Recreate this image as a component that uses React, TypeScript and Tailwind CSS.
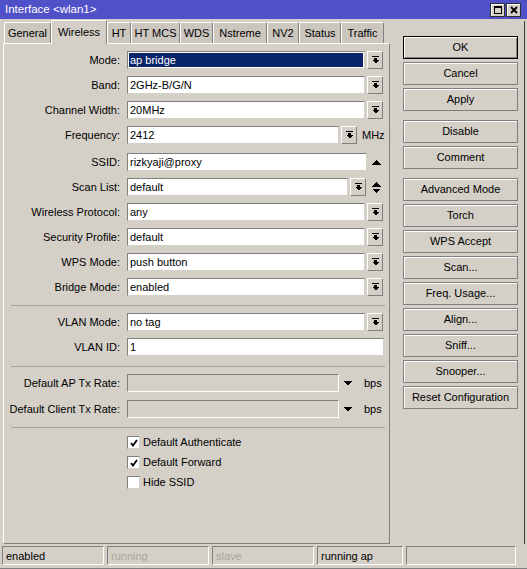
import React from 'react';

const sunken = 'border border-t-[#808080] border-l-[#808080] border-r-[#d4d0c8] border-b-[#d4d0c8]';
const raised = 'border border-t-white border-l-white border-r-[#808080] border-b-[#808080]';

function DropBtn() {
  return (
    <div className={`w-[16px] h-[18px] shrink-0 flex items-center justify-center bg-[#d4d0c8] ${raised}`}>
      <svg width="7" height="8" viewBox="0 0 7 8" shapeRendering="crispEdges">
        <rect x="0" y="0" width="7" height="1" fill="#000" />
        <rect x="2" y="2" width="3" height="2" fill="#000" />
        <polygon points="0,4 7,4 3.5,7.5" fill="#000" />
      </svg>
    </div>
  );
}

function Field({ value, className }: { value: string; className: string }) {
  return (
    <div className={`h-[18px] shrink-0 flex items-center pl-[2px] bg-white whitespace-nowrap overflow-hidden ${sunken} ${className}`}>
      {value}
    </div>
  );
}

function Row({ label, children, className = '' }: { label: string; children: React.ReactNode; className?: string }) {
  return (
    <div className={`flex items-center h-[18px] ${className}`}>
      <div className="w-[116px] shrink-0 text-right whitespace-nowrap">{label}</div>
      <div className="ml-[7px] flex items-center">{children}</div>
    </div>
  );
}

function ComboRow({ label, value }: { label: string; value: string }) {
  return (
    <Row label={label}>
      <Field value={value} className="w-[238px]" />
      <div className="ml-[2px]">
        <DropBtn />
      </div>
    </Row>
  );
}

function Sep({ className = '' }: { className?: string }) {
  return <div className={`h-px bg-[#a8a498] ml-[7px] mr-[4px] ${className}`} />;
}

function Check({ label, checked }: { label: string; checked: boolean }) {
  return (
    <div className="flex items-center h-[13px] pl-[123px]">
      <div className={`w-[13px] h-[13px] bg-white flex items-center justify-center ${sunken}`}>
        {checked && (
          <svg width="8" height="8" viewBox="0 0 8 8">
            <path d="M1 4 L3 6.5 L7 1" stroke="#000" strokeWidth="1.8" fill="none" />
          </svg>
        )}
      </div>
      <span className="ml-[3px]">{label}</span>
    </div>
  );
}

function Tab({ label, w, active }: { label: string; w: string; active?: boolean }) {
  return (
    <div
      className={`${w} flex items-center justify-center rounded-t-[2px] border-t border-l border-r border-t-white border-l-white border-r-[#808080] ${
        active ? 'h-[24px] -mb-px relative z-10 bg-[#d4d0c8]' : 'h-[21px] bg-[#cbc7bf]'
      }`}
    >
      {label}
    </div>
  );
}

function Btn({ label, def, className = '' }: { label: string; def?: boolean; className?: string }) {
  return (
    <div
      className={`h-[23px] flex items-center justify-center bg-[#d4d0c8] border ${
        def
          ? 'border-black shadow-[inset_1px_1px_0_#fff,inset_-1px_-1px_0_#808080]'
          : 'border-[#808080] shadow-[inset_1px_1px_0_#fff]'
      } ${className}`}
    >
      {label}
    </div>
  );
}

function StatusCell({ text, w, dim }: { text: string; w: string; dim?: boolean }) {
  return (
    <div
      className={`${w} h-[19px] flex items-center pl-[3px] pt-px border border-t-[#808080] border-l-[#808080] border-r-white border-b-white ${
        dim ? 'text-[#a8a49c]' : 'text-black'
      }`}
    >
      {text}
    </div>
  );
}

export default function App() {
  return (
    <div className="w-[527px] h-[569px] bg-[#d4d0c8] text-black text-[11px] leading-none font-['Liberation_Sans',Arial,sans-serif] flex flex-col overflow-hidden select-none">
      {/* title bar */}
      <div className="h-[19px] shrink-0 bg-[#5050c8] flex items-center pl-[5px] pr-[6px]">
        <span className="text-white text-[11.5px] flex-1">Interface &lt;wlan1&gt;</span>
        <div className="flex gap-[1px]">
          <div className="w-[15px] h-[14px] bg-[#d4d0c8] border border-[#303030] shadow-[inset_1px_1px_0_#fff] flex items-center justify-center">
            <div className="w-[8px] h-[8px] border border-black border-t-2" />
          </div>
          <div className="w-[15px] h-[14px] bg-[#d4d0c8] border border-[#303030] shadow-[inset_1px_1px_0_#fff] flex items-center justify-center">
            <svg width="8" height="8" viewBox="0 0 8 8">
              <path d="M1 1 L7 7 M7 1 L1 7" stroke="#000" strokeWidth="1.8" />
            </svg>
          </div>
        </div>
      </div>

      {/* main */}
      <div className="h-[525px] shrink-0 flex">
        <div className="pl-[3px] flex flex-col">
          <div className="h-[24px] flex items-end pl-[1px]">
            <Tab label="General" w="w-[47px]" />
            <Tab label="Wireless" w="w-[56px]" active />
            <Tab label="HT" w="w-[24px]" />
            <Tab label="HT MCS" w="w-[49px]" />
            <Tab label="WDS" w="w-[33px]" />
            <Tab label="Nstreme" w="w-[54px]" />
            <Tab label="NV2" w="w-[32px]" />
            <Tab label="Status" w="w-[42px]" />
            <Tab label="Traffic" w="w-[43px]" />
          </div>
          <div className={`w-[387px] h-[501px] ${raised} flex flex-col gap-[7px] pt-[7px]`}>
            <Row label="Mode:">
              <div className={`w-[238px] h-[18px] p-px bg-white ${sunken}`}>
                <div className="h-full bg-[#0a246a] text-white flex items-center pl-[1px]">ap bridge</div>
              </div>
              <div className="ml-[2px]">
                <DropBtn />
              </div>
            </Row>
            <ComboRow label="Band:" value="2GHz-B/G/N" />
            <ComboRow label="Channel Width:" value="20MHz" />
            <Row label="Frequency:">
              <Field value="2412" className="w-[212px]" />
              <div className="ml-[2px]">
                <DropBtn />
              </div>
              <span className="ml-[5px]">MHz</span>
            </Row>
            <Row label="SSID:" className="mt-[2px]">
              <Field value="rizkyaji@proxy" className="w-[240px]" />
              <svg className="ml-[5px]" width="9" height="5" viewBox="0 0 9 5" shapeRendering="crispEdges">
                <polygon points="4.5,0 9,5 0,5" fill="#000" />
              </svg>
            </Row>
            <Row label="Scan List:">
              <Field value="default" className="w-[221px]" />
              <div className="ml-[2px]">
                <DropBtn />
              </div>
              <svg className="ml-[6px]" width="9" height="11" viewBox="0 0 9 11" shapeRendering="crispEdges">
                <polygon points="4.5,0 9,4.5 0,4.5" fill="#000" />
                <polygon points="0,6.5 9,6.5 4.5,11" fill="#000" />
              </svg>
            </Row>
            <ComboRow label="Wireless Protocol:" value="any" />
            <ComboRow label="Security Profile:" value="default" />
            <ComboRow label="WPS Mode:" value="push button" />
            <ComboRow label="Bridge Mode:" value="enabled" />
            <Sep className="mt-[2px]" />
            <ComboRow label="VLAN Mode:" value="no tag" />
            <Row label="VLAN ID:">
              <Field value="1" className="w-[257px]" />
            </Row>
            <Sep className="mt-[3px]" />
            <Row label="Default AP Tx Rate:">
              <div className="w-[212px] h-[18px] border border-t-[#808080] border-l-[#808080] border-r-white border-b-white" />
              <svg className="ml-[5px]" width="8" height="5" viewBox="0 0 8 5" shapeRendering="crispEdges">
                <polygon points="0,0 8,0 4,5" fill="#000" />
              </svg>
              <span className="ml-[12px]">bps</span>
            </Row>
            <Row label="Default Client Tx Rate:" className="mt-[1px]">
              <div className="w-[212px] h-[18px] border border-t-[#808080] border-l-[#808080] border-r-white border-b-white" />
              <svg className="ml-[5px]" width="8" height="5" viewBox="0 0 8 5" shapeRendering="crispEdges">
                <polygon points="0,0 8,0 4,5" fill="#000" />
              </svg>
              <span className="ml-[12px]">bps</span>
            </Row>
            <Sep className="mt-[2px]" />
            <div className="mt-[1px] flex flex-col gap-[7px]">
              <Check label="Default Authenticate" checked />
              <Check label="Default Forward" checked />
              <Check label="Hide SSID" checked={false} />
            </div>
          </div>
        </div>

        {/* buttons */}
        <div className="ml-[13px] mt-[17px] w-[115px] flex flex-col gap-[3px]">
          <Btn label="OK" def />
          <Btn label="Cancel" />
          <Btn label="Apply" />
          <Btn label="Disable" className="mt-[6px]" />
          <Btn label="Comment" />
          <Btn label="Advanced Mode" className="mt-[6px]" />
          <Btn label="Torch" />
          <Btn label="WPS Accept" />
          <Btn label="Scan..." />
          <Btn label="Freq. Usage..." />
          <Btn label="Align..." />
          <Btn label="Sniff..." />
          <Btn label="Snooper..." />
          <Btn label="Reset Configuration" />
        </div>
        <div className="ml-[6px] mt-[2px] w-px bg-[#404040]" />
      </div>

      {/* status bar */}
      <div className="h-[25px] shrink-0 pt-[2px] pl-[2px] flex gap-[3px] border-b border-[#808080]">
        <StatusCell text="enabled" w="w-[102px]" />
        <StatusCell text="running" w="w-[102px]" dim />
        <StatusCell text="slave" w="w-[102px]" dim />
        <StatusCell text="running ap" w="w-[86px]" />
        <StatusCell text="" w="w-[110px]" />
      </div>
    </div>
  );
}
